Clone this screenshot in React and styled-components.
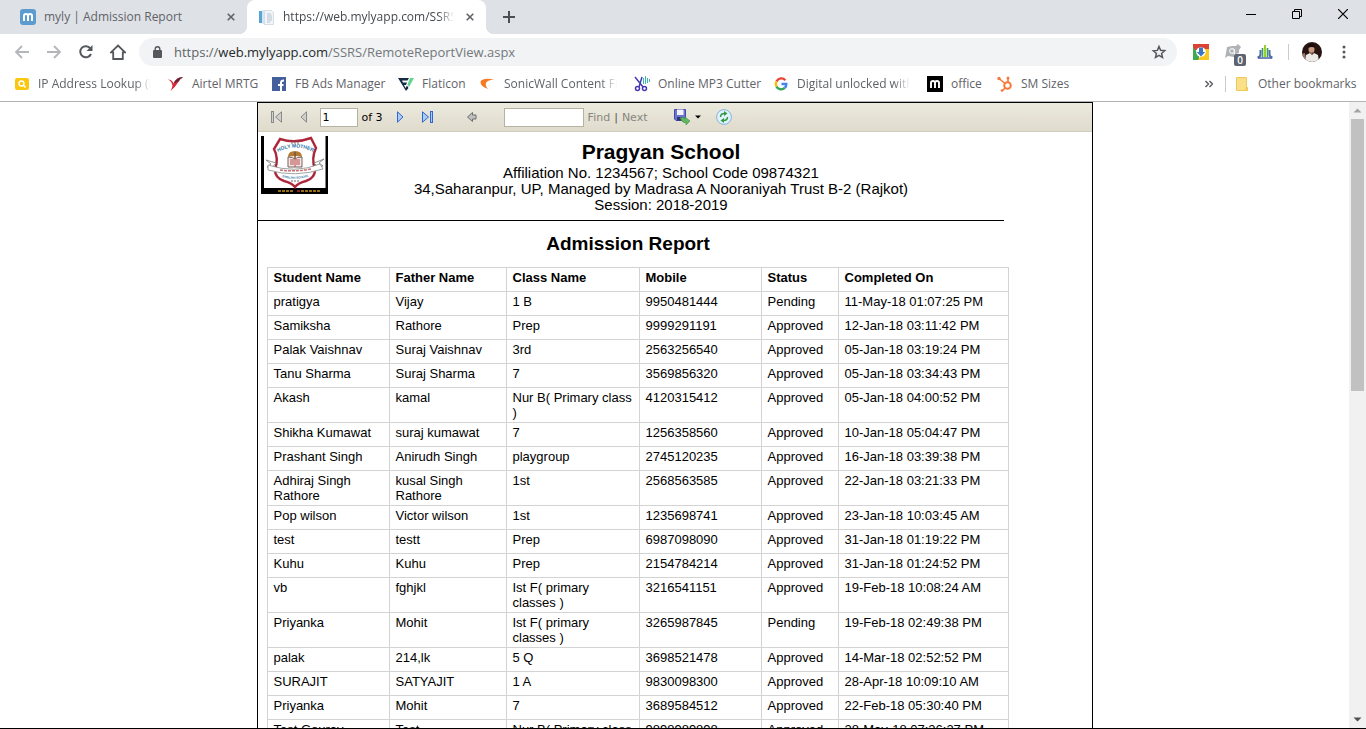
import React from "react";
import styled, { createGlobalStyle } from "styled-components";

const GlobalStyle = createGlobalStyle`
  *, *::before, *::after { box-sizing: border-box; }
  html, body { margin: 0; background: #fff; }
  button { border: 0; padding: 0; background: none; font: inherit; color: inherit; }
  a { color: inherit; text-decoration: none; }
  svg { display: block; flex: none; }
`;

const Shell = styled.div`
  display: flex;
  flex-direction: column;
  height: 100vh;
  overflow: hidden;
  border-bottom: 1px solid #000;
  font-family: "Open Sans", "Noto Sans", sans-serif;
  font-size: 12px;
  color: #5f6368;
`;

/* ---------- tab strip ---------- */

const TabStrip = styled.header`
  display: flex;
  flex: none;
  height: 34px;
  padding-left: 8px;
  background: #dee1e6;
`;

const Tab = styled.div`
  position: relative;
  display: flex;
  align-items: center;
  gap: 8px;
  width: 239px;
  padding: 0 8px 0 12px;
  border-radius: 8px 8px 0 0;
  color: ${(p) => (p.$active ? "#45494d" : "#5f6368")};
  background: ${(p) => (p.$active ? "#fff" : "transparent")};

  &::before,
  &::after {
    content: "";
    display: ${(p) => (p.$active ? "block" : "none")};
    position: absolute;
    bottom: 0;
    width: 8px;
    height: 8px;
  }
  &::before {
    right: 100%;
    background: radial-gradient(circle at 0 0, transparent 8px, #fff 8px);
  }
  &::after {
    left: 100%;
    background: radial-gradient(circle at 100% 0, transparent 8px, #fff 8px);
  }
`;

const Fading = styled.span`
  flex: ${(p) => (p.$width ? "none" : "1")};
  width: ${(p) => (p.$width ? `${p.$width}px` : "auto")};
  min-width: 0;
  overflow: ${(p) => (p.$fade ? "hidden" : "visible")};
  white-space: nowrap;
  line-height: 18px;
  mask-image: ${(p) =>
    p.$fade ? "linear-gradient(to left, transparent, #000 16px)" : "none"};
`;

const IconButton = styled.button`
  display: flex;
  flex: none;
  align-items: center;
  justify-content: center;
  width: ${(p) => p.$width || 32}px;
  height: ${(p) => p.$height || 28}px;
`;

const WindowControls = styled.div`
  display: flex;
  margin-left: auto;
`;

/* ---------- address bar ---------- */

const NavBar = styled.nav`
  display: flex;
  flex: none;
  align-items: center;
  height: 36px;
  padding: 0 6px;
`;

const Omnibox = styled.div`
  display: flex;
  flex: 1;
  align-items: center;
  gap: 12px;
  min-width: 0;
  height: 28px;
  margin: 0 8px 0 5px;
  padding: 0 2px 0 14px;
  border-radius: 14px;
  background: #f1f3f4;
`;

const Address = styled.div`
  flex: 1;
  min-width: 0;
  overflow: hidden;
  white-space: nowrap;
  font-size: 13px;
  line-height: 20px;
  color: #74787c;

  strong { font-weight: 400; color: #26292c; }
  span { color: #5f6368; }
`;

const Divider = styled.span`
  flex: none;
  width: 1px;
  height: 16px;
  margin: 0 ${(p) => p.$gap}px;
  background: #c9ccd0;
`;

const Extension = styled.button`
  position: relative;
  display: flex;
  align-items: center;
  justify-content: center;
  width: 32px;
  height: 28px;
`;

const Badge = styled.span`
  position: absolute;
  right: 3px;
  bottom: 0;
  width: 12px;
  height: 12px;
  border-radius: 2px;
  background: #5d6370;
  color: #fff;
  font-size: 10px;
  font-weight: 600;
  line-height: 12px;
  text-align: center;
`;

/* ---------- bookmarks ---------- */

const Bookmarks = styled.nav`
  display: flex;
  flex: none;
  align-items: center;
  gap: 17px;
  height: 32px;
  padding: 0 14px 3px;
  border-bottom: 1px solid #b2b4b6;
`;

const Bookmark = styled.a`
  display: flex;
  flex: none;
  align-items: center;
  gap: 8px;
`;

const BookmarkOverflow = styled.div`
  display: flex;
  align-items: center;
  margin-left: auto;
`;

/* ---------- page ---------- */

const Viewport = styled.div`
  display: flex;
  flex: 1;
  min-height: 0;
`;

const Page = styled.main`
  flex: 1;
  min-width: 0;
  overflow: hidden;
`;

const Viewer = styled.section`
  width: 836px;
  max-width: 100%;
  min-height: 100%;
  margin: 0 auto;
  border: 1px solid #000;
  font-family: "Liberation Sans", Arial, sans-serif;
  color: #000;
`;

const ReportBar = styled.div`
  display: flex;
  align-items: center;
  height: 29px;
  padding-left: 6px;
  border-bottom: 1px solid #cfccc0;
  background: linear-gradient(#ece9de, #dfdccd);
  font-family: "DejaVu Sans", Verdana, sans-serif;
  font-size: 11px;
`;

const BarGroup = styled.div`
  display: flex;
  align-items: center;
  gap: 4px;
  margin-right: ${(p) => p.$after || 0}px;
  color: ${(p) => (p.$muted ? "#88867b" : "#000")};
  white-space: nowrap;

  a { color: inherit; }
  i { font-style: normal; color: #55534a; }
`;

const BarInput = styled.input`
  width: ${(p) => p.$width}px;
  height: 19px;
  padding: 0 2px;
  border: 1px solid #b5b2a4;
  border-radius: 0;
  background: #fff;
  font: inherit;
  color: #000;
`;

const SchoolHeader = styled.header`
  display: flex;
  align-items: flex-start;
  width: 746px;
  height: 89px;
  padding: 4px 9px 0 3px;
  border-bottom: 1px solid #000;
`;

const SchoolText = styled.div`
  flex: 1;
  padding-top: 4px;
  text-align: center;
  font-size: 15px;
  line-height: 16px;

  h1 { margin: 0 0 2px; font-size: 21px; line-height: 23px; }
  p { margin: 0; }
`;

const ReportTitle = styled.h2`
  width: 741px;
  margin: 0;
  padding: 11px 0;
  font-size: 19px;
  line-height: 24px;
  text-align: center;
`;

const Table = styled.table`
  width: 742px;
  margin-left: 9px;
  table-layout: fixed;
  border-collapse: collapse;
  font-size: 13px;
  line-height: 15px;

  tr { height: 24px; }
  th, td {
    padding: 2px 4px 2px 6px;
    border: 1px solid #d3d3d3;
    text-align: left;
    vertical-align: top;
  }
`;

const Column = styled.col`
  width: ${(p) => p.$width}px;
`;

const Scrollbar = styled.aside`
  display: flex;
  flex: none;
  flex-direction: column;
  width: 17px;
  background: #f1f1f1;
`;

const Track = styled.div`
  flex: 1;
  padding: 0 2px;
`;

const Thumb = styled.div`
  height: 46%;
  background: #c1c1c1;
`;

/* ---------- drawings ---------- */

const Icon = ({ size = 16, box = "0 0 16 16", children, ...rest }) => (
  <svg width={size} height={size} viewBox={box} fill="none" aria-hidden="true" {...rest}>
    {children}
  </svg>
);

const MylyIcon = () => (
  <Icon>
    <rect width="16" height="16" rx="3" fill="#5b9bd0" />
    <path d="M4 12V6.8Q4 5 6 5T8 6.8V12M8 6.8Q8 5 10 5T12 6.8V12" stroke="#fff" strokeWidth="2" />
  </Icon>
);

const ReportIcon = () => (
  <Icon>
    <path d="M0 2h3v12H0z" fill="#5aa3d6" />
    <path d="M3 1h2v14H3z" fill="#d3e8f4" />
    <path d="M5.500 1.500h7l2 2v12h-9z" fill="#f1f5f9" stroke="#d5dde5" />
    <path d="M8 5h4M8 7h5M8 9h5M8 11h5M8 13h3" stroke="#b5c3d0" />
  </Icon>
);

const CloseIcon = () => (
  <Icon size={8} box="0 0 8 8">
    <path d="M0.700 0.700l6.600 6.600M7.300 0.700l-6.600 6.600" stroke="#5f6368" strokeWidth="1.600" />
  </Icon>
);

const PlusIcon = () => (
  <Icon size={12} box="0 0 12 12">
    <path d="M6 0v12M0 6h12" stroke="#4b4f54" strokeWidth="2" />
  </Icon>
);

const ArrowIcon = ({ flip }) => (
  <Icon>
    <path
      d={flip ? "M1 8h13M8 2l6 6-6 6" : "M15 8H2M8 2L2 8l6 6"}
      stroke="#b4b6b9"
      strokeWidth="1.800"
    />
  </Icon>
);

const ReloadIcon = () => (
  <Icon>
    <path d="M13 10a5.600 5.600 0 1 1-.7-5.700" stroke="#54585d" strokeWidth="2" />
    <path d="M14.500 1v6h-6z" fill="#54585d" />
  </Icon>
);

const HomeIcon = () => (
  <Icon>
    <path d="M1 8.300L8 1.500l7 6.800h-2.200V15H3.200V8.300z" stroke="#54585d" strokeWidth="1.800" />
  </Icon>
);

const LockIcon = () => (
  <svg width="9" height="12" viewBox="0 0 9 12" fill="none" aria-hidden="true">
    <rect y="4" width="9" height="8" rx="1" fill="#54585d" />
    <path d="M2.200 4.500V3a2.300 2.300 0 0 1 4.600 0v1.500" stroke="#54585d" strokeWidth="1.400" />
  </svg>
);

const StarIcon = () => (
  <Icon>
    <path
      d="M8 2.500l1.600 3.800 4.100.4-3.100 2.700.9 4L8 11.400l-3.500 2.100.9-4-3.100-2.700 4.100-.4z"
      stroke="#54585d"
      strokeWidth="1.500"
    />
  </Icon>
);

const DownloadExtIcon = () => (
  <Icon>
    <path d="M0 0h16v6H0z" fill="#dc4335" />
    <path d="M0 3l6 7v6H0z" fill="#42a852" />
    <path d="M16 5v11H5l4-6 2-5z" fill="#fbc81d" />
    <circle cx="8" cy="8" r="4.800" fill="#fff" />
    <path d="M6 3.500h4V8h2.200L8 12.500 3.800 8H6z" fill="#3976c4" />
  </Icon>
);

const GreyExtIcon = () => (
  <Icon>
    <path d="M2 3l5-1 4 0 2-2 3 3-2 3 0 3-3 1-2 3-6-1-3 2 1-5z" fill="#b0b2b6" />
    <circle cx="7" cy="7" r="2.300" stroke="#eef0f1" strokeWidth="1.200" />
    <path d="M9.500 5v6" stroke="#eef0f1" strokeWidth="1.200" />
  </Icon>
);

const BarsExtIcon = () => (
  <Icon>
    <path d="M3.500 6v4q0 3-3 3.500M12.500 6v4q0 3 3 3.500" stroke="#4b6fae" strokeWidth="2" />
    <path d="M5.500 4v9M10.500 4v9" stroke="#3d9b58" strokeWidth="1.600" />
    <path d="M8 1v12" stroke="#9bcf2b" strokeWidth="2" />
    <path d="M1 14h14" stroke="#4b5da3" strokeWidth="1.500" />
  </Icon>
);

const Avatar = () => (
  <Icon size={20} box="0 0 20 20">
    <clipPath id="avatar-round"><circle cx="10" cy="10" r="10" /></clipPath>
    <g clipPath="url(#avatar-round)">
      <path d="M0 0h20v20H0z" fill="#27130f" />
      <path d="M0 12l3-1 1 9H0z" fill="#9c7b6c" />
      <path d="M3 20l1-7 4-2 2 2 2-2 4 2 1 7z" fill="#ece8e6" />
      <ellipse cx="9.500" cy="7" rx="3" ry="4.300" fill="#c99b82" />
      <path d="M6 6q0-4 3.500-4T13 6q-3-2-7 0z" fill="#150c0b" />
      <path d="M7 9.500q2.500 1.500 5 0l-2.500 3z" fill="#9b6a56" />
    </g>
  </Icon>
);

const MenuIcon = () => (
  <Icon>
    <g fill="#54585d">
      <circle cx="8" cy="3" r="1.500" />
      <circle cx="8" cy="8" r="1.500" />
      <circle cx="8" cy="13" r="1.500" />
    </g>
  </Icon>
);

const bookmarkIcons = {
  ip: (
    <Icon>
      <rect x="1" y="2" width="14" height="12" rx="2" fill="#f9c80e" />
      <circle cx="7.500" cy="7.500" r="2.500" stroke="#fff" strokeWidth="1.400" />
      <path d="M9.500 9.500l2 2" stroke="#fff" strokeWidth="1.400" />
    </Icon>
  ),
  airtel: (
    <Icon>
      <path d="M0 3.500q4 0 5.500 4 4-7 9.500-6-3 1-5 5-3 5-7.500 8.500 2-4 2-5.500Q3.500 5 0 3.500z" fill="#d8293b" />
      <path d="M5.500 7.500q3-7 9.500-6.500-3 1.500-4.500 4.500l-3 1z" fill="#6a2135" />
    </Icon>
  ),
  facebook: (
    <Icon>
      <rect x="1" y="1" width="14" height="14" fill="#43609c" />
      <path d="M10 15V6.500q0-2 3-2M7 9h5.500" stroke="#fff" strokeWidth="2" />
    </Icon>
  ),
  flaticon: (
    <Icon>
      <path d="M0 2h11L9.500 4.500H4l1 2h4L8 9H6l1.500 3L9 9.500l1.500 2.500L8 15z" fill="#152c43" />
      <path d="M12 2h4l-5 9-1.500-2.500z" fill="#61d58d" />
    </Icon>
  ),
  sonic: (
    <Icon>
      <path d="M0.500 5.500Q3 1.500 14 3.500 7 4 6 7q-1 3 2 6Q0 10 0.500 5.500z" fill="#f57a24" />
    </Icon>
  ),
  mp3: (
    <Icon>
      <path d="M1 1l8 10M8 1L5 11" stroke="#4638b8" strokeWidth="1.500" />
      <circle cx="3.500" cy="12.500" r="2" stroke="#4638b8" strokeWidth="1.500" />
      <circle cx="10.500" cy="12.500" r="2" stroke="#4638b8" strokeWidth="1.500" />
      <path d="M9.500 2v6M11.500 0v8M13.500 2v5M15.500 3v3" stroke="#35b9b0" strokeWidth="1" />
    </Icon>
  ),
  google: (
    <Icon>
      <g strokeWidth="2.400">
        <path d="M12.300 4.200A5.300 5.300 0 0 0 3.500 5.400" stroke="#e94335" />
        <path d="M3.500 5.400a5.300 5.300 0 0 0 0 5.200" stroke="#fbbb05" />
        <path d="M3.500 10.600a5.300 5.300 0 0 0 8.300 1.300" stroke="#34a653" />
        <path d="M11.800 11.900A5.300 5.300 0 0 0 13.300 8H8.500" stroke="#4285f3" />
      </g>
    </Icon>
  ),
  office: (
    <Icon>
      <path d="M0 0h16v16H0z" fill="#000" />
      <path d="M4 12V6.800Q4 5 6 5T8 6.800V12M8 6.800Q8 5 10 5T12 6.800V12" stroke="#fff" strokeWidth="1.900" />
    </Icon>
  ),
  hubspot: (
    <Icon>
      <circle cx="10.500" cy="9.500" r="3.300" stroke="#f5793b" strokeWidth="2" />
      <path d="M2 2.500l6 5M11 6V2M8 12l-3 3" stroke="#f5793b" strokeWidth="1.600" />
      <circle cx="2" cy="2.500" r="1.700" fill="#f5793b" />
      <circle cx="11" cy="2" r="1.500" fill="#f5793b" />
      <circle cx="5" cy="14.500" r="1.300" fill="#f5793b" />
    </Icon>
  ),
};

const FolderIcon = () => (
  <svg width="16" height="14" viewBox="0 0 16 14" aria-hidden="true">
    <path d="M2.500 0.500h10v9l1 1v3h-11z" fill="#fbe08a" stroke="#edc95c" />
    <path d="M11.500 10q2-1 2 1v2.500h-2z" fill="#f2ca55" />
  </svg>
);

const StepIcon = ({ bar, back, active }) => {
  const stroke = active ? "#2f66cf" : "#8a8a8a";
  const fill = active ? "#a9cdfb" : "#cfcfcf";
  return (
    <svg width="14" height="12" viewBox="0 0 14 12" aria-hidden="true">
      <g transform={back ? "matrix(-1 0 0 1 14 0)" : undefined} fill={fill} stroke={stroke}>
        <path d={bar ? "M1.500 0.800v10.400l6-5.200z" : "M4.500 0.800v10.400l5.500-5.200z"} />
        {bar && <rect x="9.500" y="0.500" width="2" height="11" />}
      </g>
    </svg>
  );
};

const BackIcon = () => (
  <Icon size={12} box="0 0 12 12">
    <path d="M1.500 6l5-4.500v2.500h3.500v4H6.500v2.500z" fill="#c0c0c0" stroke="#6f6f6f" />
  </Icon>
);

const SaveIcon = () => (
  <Icon>
    <path d="M0.500 0.500h11v11H2l-1.500-1.500z" fill="#6d74cf" stroke="#434ba6" />
    <path d="M3 0.500h6.500V6H3z" fill="#f3f4fb" />
    <path d="M3 8h5v3.500H3z" fill="#2e3472" />
    <path d="M6 8.500q4 0 5 1.500V8l5 4-4 4v-2q-4 0-6-5.500z" fill="#62b862" stroke="#3c8f42" strokeWidth=".6" />
  </Icon>
);

const RefreshIcon = () => (
  <Icon>
    <circle cx="8" cy="8" r="7.400" fill="#e2f1fb" stroke="#7fb4dc" />
    <path d="M4.500 8q0-3.500 4-3.500M11.500 8q0 3.500-4 3.500" stroke="#2e9b46" strokeWidth="1.500" />
    <path d="M8 2l3.500 2.500L8 7zM8 9l-3.500 2.500L8 14z" fill="#2e9b46" />
  </Icon>
);

const Crest = () => (
  <svg width="67" height="58" viewBox="0 0 67 58" role="img" aria-label="School crest">
    <path d="M0 0h67v58H0z" fill="#000" />
    <path d="M3 0h61.500v52H3z" fill="#fff" />
    <path
      d="M19 3q15 5 31-1l5 10q-5 10-1 22 0 8-9 11-8 2-11 6-3-4-11-6-9-3-9-11 4-12-1-21z"
      fill="#fff"
      stroke="#c02c40"
      strokeWidth="2.500"
    />
    <path d="M19 3q15 5 31-1l5 10q-5 10-1 22 0 8-9 11-8 2-11 6-3-4-11-6-9-3-9-11 4-12-1-21z" fill="none" stroke="#5e2b39" strokeWidth=".5" />
    <path d="M30 7h9" stroke="#777" strokeDasharray="2 1" />
    <path id="crest-arc" d="M17 16q17-9 35 0" fill="none" />
    <text fontFamily="Liberation Sans" fontWeight="700" fontSize="5" fill="#276fa4" textAnchor="middle">
      <textPath href="#crest-arc" startOffset="50%">HOLY MOTHER</textPath>
    </text>
    <path d="M27 21q0-6 7-6t7 6q-7-2-14 0z" fill="#b57b36" />
    <path d="M34 16v7" stroke="#7b5634" strokeWidth="1.500" />
    <path d="M27 21q5 0 7 2 2-2 7-2v10H27z" fill="#f4e6e3" stroke="#74605e" />
    <path d="M34 22v9M30 23v6M32 23v6M36 23v6M38 23v6" stroke="#b54b4b" />
    <path d="M5 24l10 3-4 5-5-1 4-3zM63 23l-10 4 4 4 5-1-4-3z" fill="#fff" stroke="#777" strokeWidth=".8" />
    <path d="M7 29q27 9 52-1l3 5q-28 9-55 1z" fill="#fff" stroke="#8a8a8a" strokeWidth=".8" />
    <path d="M19 34q15 2 31-1" stroke="#c86e70" strokeWidth="1.500" strokeDasharray="3 1" fill="none" />
    <path id="crest-low" d="M18 40q16 6 33-1" fill="none" />
    <text fontFamily="Liberation Sans" fontWeight="700" fontSize="3" fill="#276fa4" textAnchor="middle">
      <textPath href="#crest-low" startOffset="50%">ENGLISH SCHOOL</textPath>
    </text>
    <path d="M30 45h8" stroke="#666" strokeDasharray="2 1" />
    <path d="M17 55h15M40 55h20" stroke="#c99222" strokeWidth="1.500" strokeDasharray="3 1" />
    <path d="M36 55h3" stroke="#b72e2e" strokeWidth="1.500" />
  </svg>
);

const Triangle = ({ down, color }) => (
  <svg width="9" height="5" viewBox="0 0 9 5" aria-hidden="true">
    <path d={down ? "M0.500 0.500h8l-4 4z" : "M0.500 4.500h8l-4-4z"} fill={color} />
  </svg>
);

/* ---------- data ---------- */

const bookmarks = [
  ["ip", "IP Address Lookup (IP", 113, true],
  ["airtel", "Airtel MRTG", 62],
  ["facebook", "FB Ads Manager", 86],
  ["flaticon", "Flaticon", 41],
  ["sonic", "SonicWall Content Filt", 113, true],
  ["mp3", "Online MP3 Cutter", 98],
  ["google", "Digital unlocked with", 113, true],
  ["office", "office", 29],
  ["hubspot", "SM Sizes", 47],
];

const columns = [
  ["Student Name", 122],
  ["Father Name", 117],
  ["Class Name", 133],
  ["Mobile", 122],
  ["Status", 77],
  ["Completed On", 170],
];

const rows = [
  ["pratigya", "Vijay", "1 B", "9950481444", "Pending", "11-May-18 01:07:25 PM"],
  ["Samiksha", "Rathore", "Prep", "9999291191", "Approved", "12-Jan-18 03:11:42 PM"],
  ["Palak Vaishnav", "Suraj Vaishnav", "3rd", "2563256540", "Approved", "05-Jan-18 03:19:24 PM"],
  ["Tanu Sharma", "Suraj Sharma", "7", "3569856320", "Approved", "05-Jan-18 03:34:43 PM"],
  ["Akash", "kamal", "Nur B( Primary class )", "4120315412", "Approved", "05-Jan-18 04:00:52 PM"],
  ["Shikha Kumawat", "suraj kumawat", "7", "1256358560", "Approved", "10-Jan-18 05:04:47 PM"],
  ["Prashant Singh", "Anirudh Singh", "playgroup", "2745120235", "Approved", "16-Jan-18 03:39:38 PM"],
  ["Adhiraj Singh Rathore", "kusal Singh Rathore", "1st", "2568563585", "Approved", "22-Jan-18 03:21:33 PM"],
  ["Pop wilson", "Victor wilson", "1st", "1235698741", "Approved", "23-Jan-18 10:03:45 AM"],
  ["test", "testt", "Prep", "6987098090", "Approved", "31-Jan-18 01:19:22 PM"],
  ["Kuhu", "Kuhu", "Prep", "2154784214", "Approved", "31-Jan-18 01:24:52 PM"],
  ["vb", "fghjkl", "Ist F( primary classes )", "3216541151", "Approved", "19-Feb-18 10:08:24 AM"],
  ["Priyanka", "Mohit", "Ist F( primary classes )", "3265987845", "Pending", "19-Feb-18 02:49:38 PM"],
  ["palak", "214,lk", "5 Q", "3698521478", "Approved", "14-Mar-18 02:52:52 PM"],
  ["SURAJIT", "SATYAJIT", "1 A", "9830098300", "Approved", "28-Apr-18 10:09:10 AM"],
  ["Priyanka", "Mohit", "7", "3689584512", "Approved", "22-Feb-18 05:30:40 PM"],
  ["Test Gourav", "Test", "Nur B( Primary class )", "9898989898", "Approved", "28-May-18 07:26:37 PM"],
];

export default function App() {
  return (
    <Shell>
      <GlobalStyle />
      <TabStrip>
        <Tab>
          <MylyIcon />
          <Fading>myly | Admission Report</Fading>
          <IconButton $width={16} aria-label="Close tab"><CloseIcon /></IconButton>
        </Tab>
        <Tab $active>
          <ReportIcon />
          <Fading $fade>https://web.mylyapp.com/SSRS/RemoteReportView.aspx</Fading>
          <IconButton $width={16} aria-label="Close tab"><CloseIcon /></IconButton>
        </Tab>
        <IconButton $width={46} $height={34} aria-label="New tab"><PlusIcon /></IconButton>
        <WindowControls>
          <IconButton $width={46} aria-label="Minimize">
            <Icon size={10} box="0 0 10 10"><path d="M0 5.500h10" stroke="#000" /></Icon>
          </IconButton>
          <IconButton $width={46} aria-label="Restore">
            <Icon size={10} box="0 0 10 10">
              <path d="M0.500 2.500h7v7h-7zM2.500 2.500v-2h7v7h-2" stroke="#000" />
            </Icon>
          </IconButton>
          <IconButton $width={46} aria-label="Close">
            <Icon size={10} box="0 0 10 10"><path d="M0 0l10 10M10 0L0 10" stroke="#000" strokeWidth="1.200" /></Icon>
          </IconButton>
        </WindowControls>
      </TabStrip>

      <NavBar>
        <IconButton aria-label="Back"><ArrowIcon /></IconButton>
        <IconButton aria-label="Forward"><ArrowIcon flip /></IconButton>
        <IconButton aria-label="Reload"><ReloadIcon /></IconButton>
        <IconButton aria-label="Home"><HomeIcon /></IconButton>
        <Omnibox>
          <LockIcon />
          <Address>
            <span>https://</span><strong>web.mylyapp.com</strong>/SSRS/RemoteReportView.aspx
          </Address>
          <IconButton aria-label="Bookmark this page"><StarIcon /></IconButton>
        </Omnibox>
        <Extension aria-label="Download extension"><DownloadExtIcon /></Extension>
        <Extension aria-label="Blocked items">
          <GreyExtIcon />
          <Badge>0</Badge>
        </Extension>
        <Extension aria-label="Statistics extension"><BarsExtIcon /></Extension>
        <Divider $gap={7} />
        <IconButton aria-label="Profile"><Avatar /></IconButton>
        <IconButton aria-label="Menu"><MenuIcon /></IconButton>
      </NavBar>

      <Bookmarks aria-label="Bookmarks">
        {bookmarks.map(([icon, label, width, fade]) => (
          <Bookmark key={icon} href="#">
            {bookmarkIcons[icon]}
            <Fading $width={width} $fade={fade}>{label}</Fading>
          </Bookmark>
        ))}
        <BookmarkOverflow>
          <IconButton $width={16} aria-label="More bookmarks">
            <Icon size={8} box="0 0 8 8">
              <path d="M0.500 1l3 3-3 3M4.500 1l3 3-3 3" stroke="#54585d" strokeWidth="1.400" />
            </Icon>
          </IconButton>
          <Divider $gap={8} />
          <Bookmark href="#">
            <FolderIcon />
            <Fading $width={94}>Other bookmarks</Fading>
          </Bookmark>
        </BookmarkOverflow>
      </Bookmarks>

      <Viewport>
        <Page>
          <Viewer>
            <ReportBar>
              <BarGroup $after={5}>
                <IconButton $width={24} aria-label="First page"><StepIcon bar back /></IconButton>
                <IconButton $width={24} aria-label="Previous page"><StepIcon back /></IconButton>
                <BarInput $width={38} defaultValue="1" aria-label="Current page" />
                <span>of 3</span>
              </BarGroup>
              <BarGroup $after={20}>
                <IconButton $width={24} aria-label="Next page"><StepIcon active /></IconButton>
                <IconButton $width={24} aria-label="Last page"><StepIcon bar active /></IconButton>
              </BarGroup>
              <BarGroup $after={20}>
                <IconButton $width={24} aria-label="Back to parent report"><BackIcon /></IconButton>
              </BarGroup>
              <BarGroup $muted $after={26}>
                <BarInput $width={80} aria-label="Find text in report" />
                <a href="#">Find</a>
                <i>|</i>
                <a href="#">Next</a>
              </BarGroup>
              <BarGroup $after={10}>
                <IconButton $width={28} aria-label="Export">
                  <SaveIcon />
                  <svg width="12" height="4" viewBox="0 0 12 4" aria-hidden="true">
                    <path d="M5 0.500h6l-3 3z" fill="#000" />
                  </svg>
                </IconButton>
              </BarGroup>
              <IconButton $width={24} aria-label="Refresh"><RefreshIcon /></IconButton>
            </ReportBar>

            <SchoolHeader>
              <Crest />
              <SchoolText>
                <h1>Pragyan School</h1>
                <p>Affiliation No. 1234567; School Code 09874321</p>
                <p>34,Saharanpur, UP, Managed by Madrasa A Nooraniyah Trust B-2 (Rajkot)</p>
                <p>Session: 2018-2019</p>
              </SchoolText>
            </SchoolHeader>
            <ReportTitle>Admission Report</ReportTitle>

            <Table>
              <colgroup>
                {columns.map(([name, width]) => <Column key={name} $width={width} />)}
              </colgroup>
              <thead>
                <tr>{columns.map(([name]) => <th key={name} scope="col">{name}</th>)}</tr>
              </thead>
              <tbody>
                {rows.map((row) => (
                  <tr key={row[3]}>{row.map((cell, i) => <td key={i}>{cell}</td>)}</tr>
                ))}
              </tbody>
            </Table>
          </Viewer>
        </Page>
        <Scrollbar aria-label="Page scroll">
          <IconButton $width={17} $height={17} aria-label="Scroll up"><Triangle color="#a3a3a3" /></IconButton>
          <Track><Thumb /></Track>
          <IconButton $width={17} $height={17} aria-label="Scroll down"><Triangle down color="#505050" /></IconButton>
        </Scrollbar>
      </Viewport>
    </Shell>
  );
}
